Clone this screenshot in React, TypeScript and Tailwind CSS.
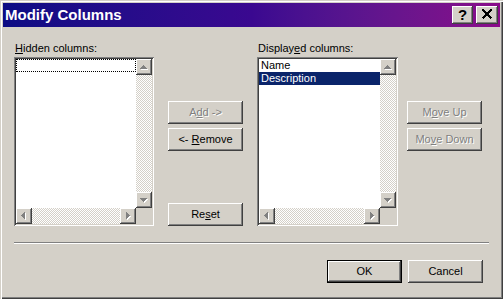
import React from "react";

const raised =
  "bg-[#d4d0c8] shadow-[inset_-1px_-1px_#404040,inset_1px_1px_#ffffff,inset_-2px_-2px_#808080]";
const sunken =
  "bg-white shadow-[inset_1px_1px_#808080,inset_-1px_-1px_#ffffff,inset_2px_2px_#404040,inset_-2px_-2px_#d4d0c8] p-[2px]";
const checker =
  "bg-[image:repeating-conic-gradient(#d4d0c8_0_25%,#ffffff_0_50%)] bg-[length:2px_2px]";

type Dir = "up" | "down" | "left" | "right";

function Arrow({ dir }: { dir: Dir }) {
  const rects: { x: number; y: number; w: number; h: number }[] = [];
  for (let i = 0; i < 4; i++) {
    if (dir === "up") rects.push({ x: 7 - i, y: 6 + i, w: 2 * i + 1, h: 1 });
    if (dir === "down") rects.push({ x: 4 + i, y: 6 + i, w: 7 - 2 * i, h: 1 });
    if (dir === "left") rects.push({ x: 5 + i, y: 7 - i, w: 1, h: 2 * i + 1 });
    if (dir === "right") rects.push({ x: 6 + i, y: 4 + i, w: 1, h: 7 - 2 * i });
  }
  return (
    <svg width="16" height="16" viewBox="0 0 16 16" shapeRendering="crispEdges" className="block">
      {rects.map((r, k) => (
        <rect key={"s" + k} x={r.x + 1} y={r.y + 1} width={r.w} height={r.h} fill="#ffffff" />
      ))}
      {rects.map((r, k) => (
        <rect key={"f" + k} x={r.x} y={r.y} width={r.w} height={r.h} fill="#808080" />
      ))}
    </svg>
  );
}

function ScrollBtn({ dir }: { dir: Dir }) {
  return (
    <div className={`w-[16px] h-[16px] shrink-0 ${raised}`}>
      <Arrow dir={dir} />
    </div>
  );
}

function ListBox({ children }: { children: React.ReactNode }) {
  return (
    <div className={`h-[169px] ${sunken}`}>
      <div className="grid h-full grid-cols-[1fr_16px] grid-rows-[1fr_16px]">
        <div className="overflow-hidden">{children}</div>
        <div className="flex flex-col">
          <ScrollBtn dir="up" />
          <div className={`flex-1 ${checker}`} />
          <ScrollBtn dir="down" />
        </div>
        <div className="flex">
          <ScrollBtn dir="left" />
          <div className={`flex-1 ${checker}`} />
          <ScrollBtn dir="right" />
        </div>
        <div className="bg-[#d4d0c8]" />
      </div>
    </div>
  );
}

function Btn({
  children,
  disabled,
  def,
}: {
  children: React.ReactNode;
  disabled?: boolean;
  def?: boolean;
}) {
  return (
    <div
      className={`w-[75px] h-[23px] shrink-0 flex items-center justify-center ${
        def
          ? "bg-[#d4d0c8] border border-black shadow-[inset_-1px_-1px_#404040,inset_1px_1px_#ffffff,inset_-2px_-2px_#808080]"
          : raised
      } ${disabled ? "text-[#808080] [text-shadow:1px_1px_#ffffff]" : "text-black"}`}
    >
      <span>{children}</span>
    </div>
  );
}

export default function App() {
  return (
    <div className="w-[503px] h-[299px] bg-[#d4d0c8] shadow-[inset_1px_1px_#d4d0c8,inset_2px_2px_#ffffff,inset_-1px_-1px_#404040,inset_-2px_-2px_#808080] p-[3px] font-['Liberation_Sans',Arial,sans-serif] text-[11px] leading-[13px] text-black flex flex-col overflow-hidden">
      {/* Title bar */}
      <div className="h-[24px] shrink-0 flex items-center bg-linear-to-r from-[#0c0c84] via-[#3a0890] to-[#8a0a8a] pl-[2px] pr-[2px]">
        <span className="text-white font-bold text-[15px] leading-[18px] tracking-[0px]">Modify Columns</span>
        <div className="ml-auto flex gap-[3px]">
          <div className={`w-[21px] h-[18px] flex items-center justify-center ${raised}`}>
            <span className="font-bold text-[15px] leading-[15px] text-black pb-[1px]">?</span>
          </div>
          <div className={`w-[22px] h-[18px] flex items-center justify-center ${raised}`}>
            <svg width="12" height="11" viewBox="0 0 12 11" shapeRendering="crispEdges" className="block mb-[1px]">
              <path d="M1.5 0.5 L10.5 9.5 M10.5 0.5 L1.5 9.5" stroke="#000" strokeWidth="2" fill="none" />
            </svg>
          </div>
        </div>
      </div>

      {/* Body */}
      <div className="flex-1 pl-[11px] pt-[15px] flex flex-col">
        <div className="flex h-[184px]">
          {/* Hidden columns */}
          <div className="w-[140px] flex flex-col">
            <div className="h-[13px] mb-[2px] pl-[1px]">
              <u>H</u>idden columns:
            </div>
            <ListBox>
              <div className="h-[13px] border border-dotted border-black" />
            </ListBox>
          </div>

          {/* Middle buttons */}
          <div className="ml-[14px] w-[75px] pt-[59px] flex flex-col">
            <Btn disabled>
              A<u>d</u>d -&gt;
            </Btn>
            <div className="mt-[4px]">
              <Btn>
                &lt;- <u>R</u>emove
              </Btn>
            </div>
            <div className="mt-auto">
              <Btn>
                Re<u>s</u>et
              </Btn>
            </div>
          </div>

          {/* Displayed columns */}
          <div className="ml-[14px] w-[141px] flex flex-col">
            <div className="h-[13px] mb-[2px] pl-[1px]">
              Display<u>e</u>d columns:
            </div>
            <ListBox>
              <div className="h-[13px] pl-[2px]">Name</div>
              <div className="h-[13px] pl-[2px] bg-[#0a246a] text-white">Description</div>
            </ListBox>
          </div>

          {/* Right buttons */}
          <div className="ml-[9px] w-[75px] pt-[59px] flex flex-col">
            <Btn disabled>
              M<u>o</u>ve Up
            </Btn>
            <div className="mt-[4px]">
              <Btn disabled>
                Mo<u>v</u>e Down
              </Btn>
            </div>
          </div>
        </div>

        {/* Separator */}
        <div className="mt-[16px] w-[475px] flex flex-col">
          <div className="h-[1px] bg-[#808080]" />
          <div className="h-[1px] bg-white" />
        </div>

        {/* Bottom buttons */}
        <div className="mt-[16px] ml-[313px] flex gap-[6px]">
          <Btn def>OK</Btn>
          <Btn>Cancel</Btn>
        </div>
      </div>
    </div>
  );
}
